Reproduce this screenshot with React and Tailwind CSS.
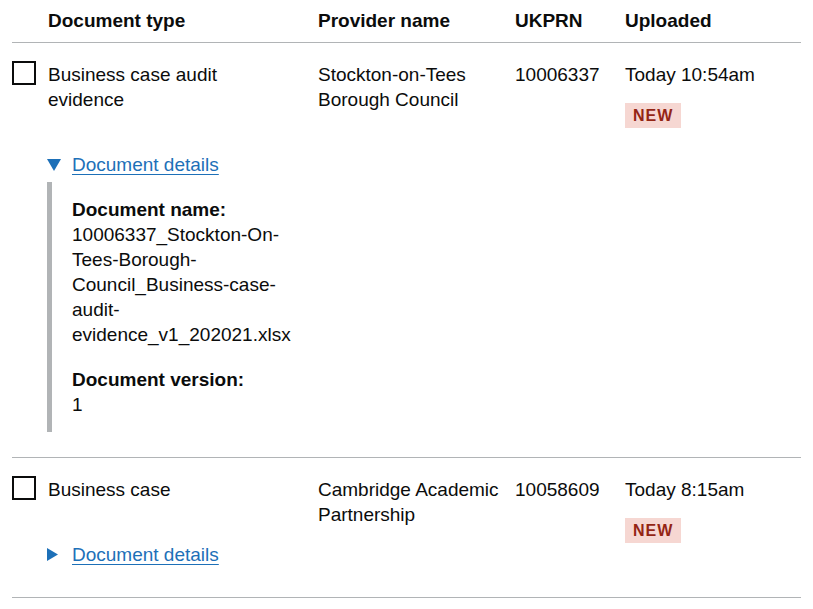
import React from 'react';

const rows = [
  {
    type: ['Business case audit', 'evidence'],
    provider: ['Stockton-on-Tees', 'Borough Council'],
    ukprn: '10006337',
    uploaded: 'Today 10:54am',
    open: true,
    fileName: ['10006337_Stockton-On-', 'Tees-Borough-', 'Council_Business-case-', 'audit-', 'evidence_v1_202021.xlsx'],
    version: '1',
  },
  {
    type: ['Business case'],
    provider: ['Cambridge Academic', 'Partnership'],
    ukprn: '10058609',
    uploaded: 'Today 8:15am',
    open: false,
  },
];

function Lines({ lines }) {
  return lines.map((l, i) => (
    <React.Fragment key={i}>
      {l}
      {i < lines.length - 1 && <br />}
    </React.Fragment>
  ));
}

function Details({ open, fileName, version }) {
  return (
    <div className="mt-10">
      <div className="flex items-center pb-[5px]">
        <span className="w-[25px] flex items-center">
          {open ? (
            <svg width="14" height="12" viewBox="0 0 14 12"><path d="M0 0h14L7 12z" fill="#1d70b8" /></svg>
          ) : (
            <svg width="11" height="13" viewBox="0 0 11 13"><path d="M0 0l11 6.5L0 13z" fill="#1d70b8" /></svg>
          )}
        </span>
        <a href="#" className="text-[#1d70b8] underline underline-offset-[3px] decoration-1">Document details</a>
      </div>
      {open && (
        <div className="border-l-[5px] border-[#b1b4b6] pl-5 py-[15px]">
          <p className="font-bold">Document name:</p>
          <p><Lines lines={fileName} /></p>
          <p className="font-bold mt-5">Document version:</p>
          <p>{version}</p>
        </div>
      )}
    </div>
  );
}

export default function App() {
  return (
    <div className="bg-white w-[813px] h-[609px] text-[#0b0c0c] text-[19px] leading-[25px] font-['Liberation_Sans',Arial,sans-serif]">
      <div className="ml-3 w-[789px]">
        {/* Header */}
        <div className="grid grid-cols-[306px_197px_110px_176px] font-bold border-b border-[#b1b4b6] pt-2 pb-[9px]">
          <div className="pl-9">Document type</div>
          <div>Provider name</div>
          <div>UKPRN</div>
          <div>Uploaded</div>
        </div>

        {rows.map((r, i) => (
          <div key={i} className="grid grid-cols-[306px_197px_110px_176px] border-b border-[#b1b4b6] pt-[19px] pb-[25px]">
            <div className="flex">
              <div className="w-6 h-6 border-2 border-[#0b0c0c] shrink-0 mr-3 -mt-px" />
              <div className="flex-1 -ml-px pr-5">
                <div className="pl-px"><Lines lines={r.type} /></div>
                <Details open={r.open} fileName={r.fileName} version={r.version} />
              </div>
            </div>
            <div><Lines lines={r.provider} /></div>
            <div>{r.ukprn}</div>
            <div>
              <div>{r.uploaded}</div>
              <div className="mt-[15px]">
                <span className="inline-block bg-[#f6d7d2] text-[#942514] font-bold text-[16px] leading-[16px] tracking-[1px] uppercase px-2 pt-[5px] pb-1">New</span>
              </div>
            </div>
          </div>
        ))}
      </div>
    </div>
  );
}
